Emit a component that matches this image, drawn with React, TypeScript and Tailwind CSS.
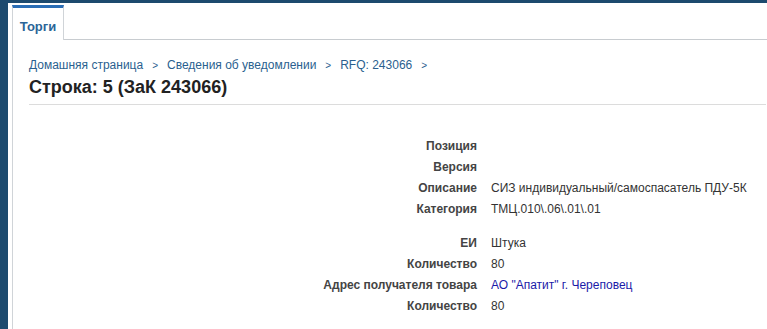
const rowsA = [
  { label: 'Позиция', value: '' },
  { label: 'Версия', value: '' },
  { label: 'Описание', value: 'СИЗ индивидуальный/самоспасатель ПДУ-5К' },
  { label: 'Категория', value: 'ТМЦ.010\\.06\\.01\\.01' },
]

const rowsB = [
  { label: 'ЕИ', value: 'Штука' },
  { label: 'Количество', value: '80' },
  { label: 'Адрес получателя товара', value: 'АО "Апатит" г. Череповец', link: true },
  { label: 'Количество', value: '80' },
]

function Rows({ rows }: { rows: { label: string; value: string; link?: boolean }[] }) {
  return (
    <div className="grid grid-cols-[448px_1fr] gap-x-[14px]">
      {rows.map((r, i) => (
        <div key={i} className="contents">
          <div className="h-[21px] text-right text-[12px] leading-[21px] font-bold text-[#444]">{r.label}</div>
          <div className={'h-[21px] text-[12px] leading-[21px] ' + (r.link ? 'text-[#1a1aa8]' : 'text-[#333]')}>
            {r.value}
          </div>
        </div>
      ))}
    </div>
  )
}

export default function App() {
  return (
    <div
      className="h-[329px] w-[767px] overflow-hidden bg-[#1d4a6e] pt-[3px] pl-[8px]"
      style={{ fontFamily: '"Liberation Sans", Arial, sans-serif' }}
    >
      <div className="flex h-full flex-col bg-white pt-[2px] pl-[4px]">
        <div className="flex h-[35px] shrink-0">
          <div className="w-[52px] border-x border-t-[3px] border-x-[#d0d4d8] border-t-[#2a6db5] pt-[11px] text-center text-[13px] leading-[16px] font-bold text-[#2b6598]">
            Торги
          </div>
          <div className="flex-1 border-b border-[#c8ccd0]" />
        </div>
        <div className="flex-1 border-l border-[#d0d4d8] pt-[17px] pl-[16px] pr-[1px]">
          <div className="flex gap-[9px] text-[12px] leading-[17px] text-[#2a5f8f]">
            <span>Домашняя страница</span>
            <span className="text-[10px]">&gt;</span>
            <span>Сведения об уведомлении</span>
            <span className="text-[10px]">&gt;</span>
            <span>RFQ: 243066</span>
            <span className="text-[10px]">&gt;</span>
          </div>
          <h1 className="mt-[2px] text-[18px] leading-[22px] font-bold text-[#222]">Строка: 5 (ЗаК 243066)</h1>
          <div className="mt-[6px] border-t border-[#dcdcdc]" />
          <div className="mt-[31px]">
            <Rows rows={rowsA} />
            <div className="h-[13px]" />
            <Rows rows={rowsB} />
          </div>
        </div>
      </div>
    </div>
  )
}
